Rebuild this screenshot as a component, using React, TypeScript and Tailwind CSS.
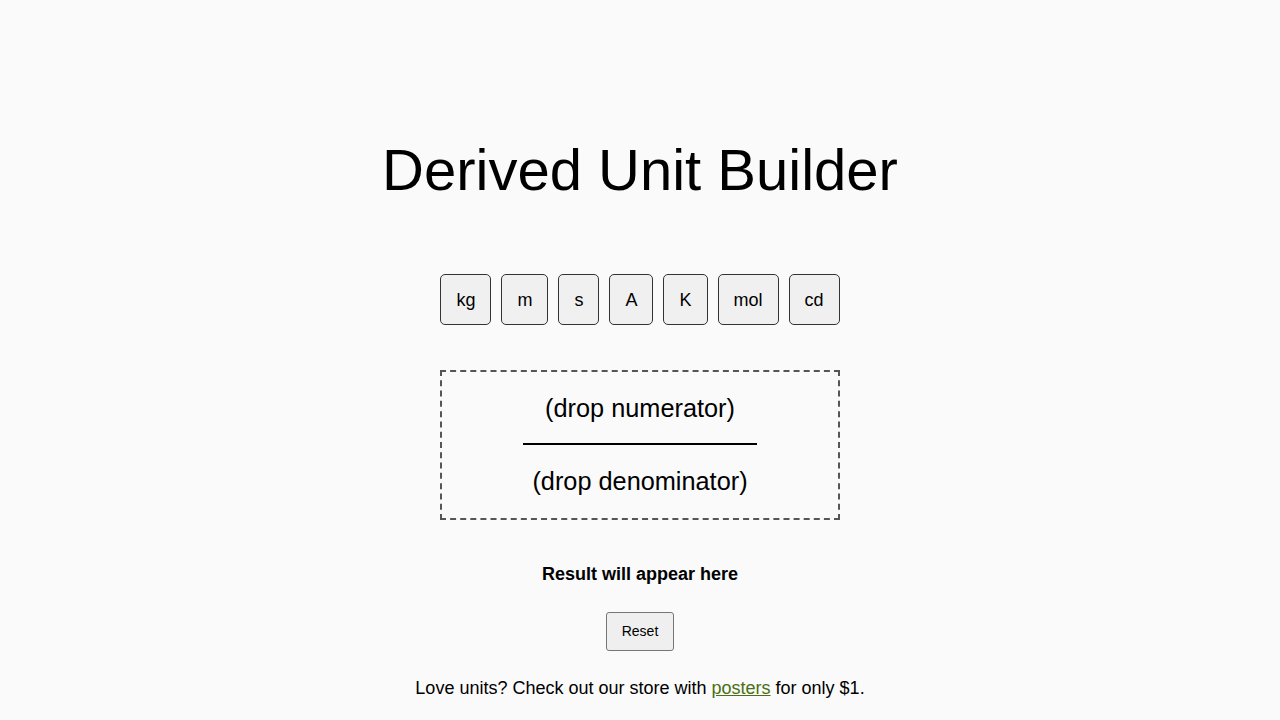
const UNITS = ["kg", "m", "s", "A", "K", "mol", "cd"];

export default function App() {
  return (
    <main
      className="flex min-h-screen flex-col items-center bg-[#fafafa] pt-[137px] text-black"
      style={{ fontFamily: '"Liberation Sans", Arial, sans-serif' }}
    >
      <h1 className="text-[58px] font-normal leading-[66px]">Derived Unit Builder</h1>

      <div className="mt-[71px] flex gap-[10px]">
        {UNITS.map((u) => (
          <button
            key={u}
            className="h-[51px] rounded-[5px] border border-[#333] bg-[#f0f0f0] px-[15px] text-[18px] leading-[20px]"
          >
            {u}
          </button>
        ))}
      </div>

      <div className="mt-[45px] flex w-[400px] flex-col items-center border-2 border-dashed border-[#555] pt-[22px] pb-[22px]">
        <div className="text-[25.3px] leading-[29px]">(drop numerator)</div>
        <div className="mt-[20px] h-[2px] w-[234px] bg-black" />
        <div className="mt-[22px] text-[25.3px] leading-[29px]">(drop denominator)</div>
      </div>

      <p className="mt-[44px] text-[18px] font-bold leading-[21px]">Result will appear here</p>

      <button className="mt-[27px] rounded-[3px] border border-[#767676] bg-[#efefef] px-[15px] py-[10px] text-[14px] leading-[17px]">
        Reset
      </button>

      <p className="mt-[27px] text-[18px] leading-[21px]">
        Love units? Check out our store with{" "}
        <a href="#" className="text-[#4b6f13] underline">
          posters
        </a>{" "}
        for only $1.
      </p>
    </main>
  );
}
